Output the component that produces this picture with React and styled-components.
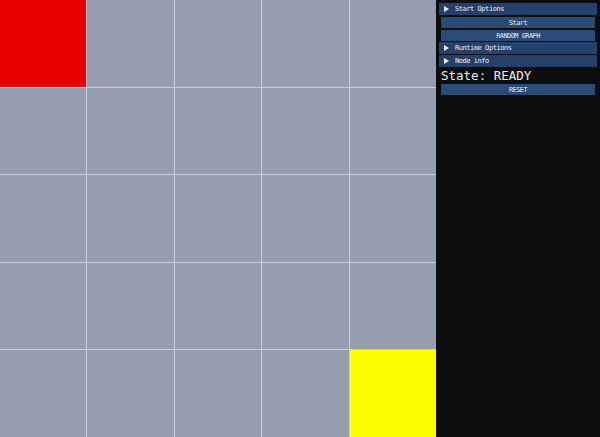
import React from 'react';
import styled, { createGlobalStyle } from 'styled-components';

const GlobalStyle = createGlobalStyle`
  html, body {
    margin: 0;
    padding: 0;
    background: #0d0c0e;
    overflow: hidden;
  }
`;

const Page = styled.div`
  display: flex;
  width: 600px;
  height: 437px;
`;

const Board = styled.div`
  width: 436px;
  height: 437px;
  display: grid;
  grid-template-columns: repeat(5, 1fr);
  grid-template-rows: repeat(5, 1fr);
  gap: 1px;
  background: #c9cfdf;
`;

const Cell = styled.div`
  background: ${(p) => p.$color || '#959db1'};
`;

const Panel = styled.div`
  width: 164px;
  background: #0d0c0e;
  padding: 3px 3px 0 3px;
  box-sizing: border-box;
  display: flex;
  flex-direction: column;
  font-family: 'DejaVu Sans Mono', 'Liberation Mono', monospace;
  color: #e8ecf2;
`;

const Header = styled.div`
  height: 12px;
  margin-bottom: 1px;
  background: #25406a;
  display: flex;
  align-items: center;
  padding-left: 5px;
  font-size: 7px;
  letter-spacing: -0.45px;
`;

const Arrow = styled.span`
  width: 0;
  height: 0;
  border-top: 3px solid transparent;
  border-bottom: 3px solid transparent;
  border-left: 5px solid #e8ecf2;
  margin-right: 6px;
`;

const Button = styled.div`
  height: 11px;
  margin: 1px 2px;
  background: #2b4b77;
  display: flex;
  align-items: center;
  justify-content: center;
  font-size: 6.8px;
  letter-spacing: -0.45px;
`;

const State = styled.div`
  font-size: 12.5px;
  height: 15px;
  line-height: 15px;
  padding-left: 2px;
`;

const cells = Array.from({ length: 25 }, (_, i) => i);

const colorFor = (i) => {
  if (i === 0) return '#e80000';
  if (i === 24) return '#ffff00';
  return undefined;
};

export default function App() {
  return (
    <>
      <GlobalStyle />
      <Page>
        <Board>
          {cells.map((i) => (
            <Cell key={i} $color={colorFor(i)} />
          ))}
        </Board>
        <Panel>
          <Header>
            <Arrow />Start Options
          </Header>
          <Button>Start</Button>
          <Button>RANDOM GRAPH</Button>
          <Header>
            <Arrow />Runtime Options
          </Header>
          <Header>
            <Arrow />Node info
          </Header>
          <State>State: READY</State>
          <Button>RESET</Button>
        </Panel>
      </Page>
    </>
  );
}
